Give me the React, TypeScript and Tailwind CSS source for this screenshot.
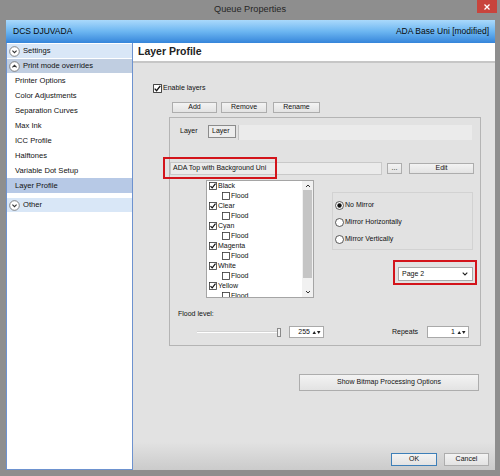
import React from "react";

const channels = ["Black", "Clear", "Cyan", "Magenta", "White", "Yellow"];

const menu = [
  "Printer Options",
  "Color Adjustments",
  "Separation Curves",
  "Max Ink",
  "ICC Profile",
  "Halftones",
  "Variable Dot Setup",
  "Layer Profile",
];

function Box({ on, size = 8 }: { on?: boolean; size?: number }) {
  return (
    <svg width={size} height={size} viewBox="0 0 8 8" className="shrink-0">
      <rect x="0.5" y="0.5" width="7" height="7" fill="#fff" stroke="#333" strokeWidth="0.8" />
      {on && (
        <path d="M1.5 4.1 L3.2 5.9 L6.5 1.7" fill="none" stroke="#111" strokeWidth="1.2" />
      )}
    </svg>
  );
}

function Radio({ on }: { on?: boolean }) {
  return (
    <svg width="9" height="9" viewBox="0 0 9 9" className="shrink-0">
      <circle cx="4.5" cy="4.5" r="4" fill="#fff" stroke="#333" strokeWidth="0.8" />
      {on && <circle cx="4.5" cy="4.5" r="2.2" fill="#111" />}
    </svg>
  );
}

function Toggle({ up }: { up?: boolean }) {
  return (
    <svg width="11" height="11" viewBox="0 0 11 11" className="shrink-0">
      <circle cx="5.5" cy="5.5" r="4.8" fill="#fff" stroke="#6a6a6a" strokeWidth="0.8" />
      <path
        d={up ? "M3.4 6.4 L5.5 4.3 L7.6 6.4" : "M3.4 4.6 L5.5 6.7 L7.6 4.6"}
        fill="none"
        stroke="#333"
        strokeWidth="1.1"
      />
    </svg>
  );
}

function SpinArrows() {
  return (
    <svg width="9" height="6" viewBox="0 0 9 6" className="shrink-0">
      <path d="M0.5 5 L2.25 2 L4 5 Z" fill="#222" />
      <path d="M5 2 L6.75 5 L8.5 2 Z" fill="#222" />
    </svg>
  );
}

function Btn({ w, label, def }: { w: string; label: string; def?: boolean }) {
  return (
    <div
      className={`${w} flex items-center justify-center border bg-linear-to-b from-[#f3f3f3] to-[#e3e3e3] text-[7px] text-[#111] ${
        def ? "border-[#3d7fb8]" : "border-[#adadad]"
      }`}
    >
      {label}
    </div>
  );
}

export default function App() {
  return (
    <div className="flex h-[476px] w-[500px] flex-col bg-[#8e8e8e] pl-[6px] pr-[5px] pb-[6px] font-['Liberation_Sans',Arial,sans-serif] text-[#111]">
      {/* title bar */}
      <div className="relative -ml-[6px] -mr-[5px] flex h-[20px] items-center justify-center text-[9.2px] text-[#262626]">
        Queue Properties
        <div className="absolute right-[3px] top-0 flex h-[13px] w-[20px] items-center justify-center bg-[#c8443c]">
          <svg width="6" height="6" viewBox="0 0 6 6">
            <path d="M0.5 0.5 L5.5 5.5 M5.5 0.5 L0.5 5.5" stroke="#fff" strokeWidth="1.3" />
          </svg>
        </div>
      </div>

      {/* blue header */}
      <div className="flex h-[23px] items-center justify-between bg-linear-to-b from-[#aad9fb] via-[#6cb6f1] to-[#3585da] pl-[7px] pr-[6px] text-[8.5px] text-[#0a0a0a]">
        <span>DCS DJUVADA</span>
        <span>ADA Base Uni [modified]</span>
      </div>

      <div className="flex h-[427px]">
        {/* left navigation */}
        <div className="flex w-[127px] flex-col border-x border-b border-[#6d92cf] bg-white text-[7.6px]">
          <div className="mt-[1px] flex h-[14px] items-center gap-[3px] bg-[#d9e7f7] pl-[2px]">
            <Toggle />
            Settings
          </div>
          <div className="mt-[1px] flex h-[14px] items-center gap-[3px] bg-[#c0cee1] pl-[2px]">
            <Toggle up />
            Print mode overrides
          </div>
          {menu.map((m) => (
            <div
              key={m}
              className={`flex h-[15px] items-center pl-[8px] ${
                m === "Layer Profile" ? "bg-[#b7c9e6]" : ""
              }`}
            >
              {m}
            </div>
          ))}
          <div className="mt-[5px] flex h-[14px] items-center gap-[3px] bg-[#d9e7f7] pl-[2px]">
            <Toggle />
            Other
          </div>
        </div>

        {/* right content */}
        <div className="flex flex-1 flex-col bg-[#e2e2e2] text-[7px]">
          <div className="flex h-[20px] items-center border-b-2 border-[#c6c6c6] bg-white pl-[5px] text-[10.5px] font-bold text-[#222]">
            Layer Profile
          </div>

          <div className="ml-[20px] mt-[20px] flex h-[10px] items-center gap-[1px]">
            <Box on size={9} />
            Enable layers
          </div>

          <div className="ml-[39px] mt-[9px] flex h-[11px]">
            <Btn w="w-[45px]" label="Add" />
            <div className="w-[4px]" />
            <Btn w="w-[46px]" label="Remove" />
            <div className="w-[6px]" />
            <Btn w="w-[47px]" label="Rename" />
          </div>

          {/* group box */}
          <div className="relative ml-[36px] mt-[4px] flex h-[229px] w-[312px] flex-col border border-[#b4b4b4]">
            <div className="mt-[7px] flex h-[15px]">
              <div className="ml-[10px] flex h-[13px] w-[28px] items-center">Layer</div>
              <div className="flex h-[13px] w-[28px] items-center border border-[#8c8c8c] bg-[#ededed] pl-[3px]">
                Layer
              </div>
              <div className="ml-[2px] mr-[8px] flex-1 border-l border-[#c4c4c4] bg-[#ebebeb]" />
            </div>

            <div className="mt-[22px] flex h-[13px] items-start">
              <div className="flex h-[13px] w-[212px] items-center border border-[#c9c9c9] bg-[#ebebeb] pl-[2px]">
                ADA Top with Background Uni
              </div>
              <div className="ml-[5px] mt-[1px] flex h-[11px]">
                <Btn w="w-[15px]" label="..." />
              </div>
              <div className="ml-[7px] mt-[1px] flex h-[11px]">
                <Btn w="w-[65px]" label="Edit" />
              </div>
            </div>

            <div className="mt-[5px] flex">
              {/* channel list */}
              <div className="ml-[36px] flex h-[118px] w-[108px] border border-[#a5a5a5] bg-white">
                <div className="flex flex-1 flex-col overflow-hidden pl-[2px]">
                  {channels.map((c) => (
                    <React.Fragment key={c}>
                      <div className="flex h-[10px] shrink-0 items-center gap-[1px]">
                        <Box on />
                        {c}
                      </div>
                      <div className="ml-[13px] flex h-[10px] shrink-0 items-center gap-[1px]">
                        <Box />
                        Flood
                      </div>
                    </React.Fragment>
                  ))}
                </div>
                <div className="flex w-[11px] flex-col items-center bg-[#f1f1f1]">
                  <svg width="6" height="9" viewBox="0 0 6 9" className="shrink-0">
                    <path d="M1 6 L3 4 L5 6" fill="none" stroke="#333" strokeWidth="1" />
                  </svg>
                  <div className="h-[88px] w-[9px] bg-[#c5c5c5]" />
                  <div className="flex-1" />
                  <svg width="6" height="9" viewBox="0 0 6 9" className="shrink-0">
                    <path d="M1 3 L3 5 L5 3" fill="none" stroke="#333" strokeWidth="1" />
                  </svg>
                </div>
              </div>

              <div className="ml-[18px] flex flex-col">
                <div className="mt-[12px] flex h-[58px] w-[141px] flex-col border border-[#d2d2d2] pl-[2px] pt-[7px]">
                  <div className="flex h-[10px] items-center gap-[1px]">
                    <Radio on />
                    No Mirror
                  </div>
                  <div className="mt-[7px] flex h-[10px] items-center gap-[1px]">
                    <Radio />
                    Mirror Horizontally
                  </div>
                  <div className="mt-[7px] flex h-[10px] items-center gap-[1px]">
                    <Radio />
                    Mirror Vertically
                  </div>
                </div>
                <div className="ml-[66px] mt-[17px] flex h-[14px] w-[75px] items-center justify-between border border-[#a9a9a9] bg-white pl-[3px] pr-[4px]">
                  Page 2
                  <svg width="6" height="4" viewBox="0 0 6 4">
                    <path d="M0.7 0.7 L3 3 L5.3 0.7" fill="none" stroke="#222" strokeWidth="1.1" />
                  </svg>
                </div>
              </div>
            </div>

            <div className="ml-[8px] mt-[11px] flex h-[10px] items-center">Flood level:</div>

            <div className="mt-[7px] flex h-[12px] items-center">
              <div className="ml-[27px] h-[2px] w-[80px] border-b border-white bg-[#d3d3d3]" />
              <div className="h-[9px] w-[4px] border border-[#8a8a8a] bg-[#f2f2f2]" />
              <div className="ml-[8px] flex h-[12px] w-[35px] items-center justify-end gap-[2px] border border-[#a9a9a9] bg-white pr-[2px]">
                255
                <SpinArrows />
              </div>
              <div className="ml-[68px] w-[26px]">Repeats</div>
              <div className="ml-[9px] flex h-[12px] w-[42px] items-center justify-end gap-[2px] border border-[#a9a9a9] bg-white pr-[2px]">
                1
                <SpinArrows />
              </div>
            </div>

            {/* highlight frames */}
            <div className="absolute left-[-7px] top-[39px] h-[22px] w-[114px] border-2 border-[#d3141b]" />
            <div className="absolute left-[223px] top-[142px] h-[25px] w-[84px] border-2 border-[#d3141b]" />
          </div>

          <div className="ml-[166px] mt-[28px] flex h-[17px]">
            <Btn w="w-[180px]" label="Show Bitmap Processing Options" />
          </div>

          <div className="mt-auto flex h-[28px] items-end justify-end gap-[7px] bg-linear-to-b from-[#e2e2e2] to-[#cbcbcb] pb-[4px] pr-[6px]">
            <div className="flex h-[13px]">
              <Btn w="w-[46px]" label="OK" def />
            </div>
            <div className="flex h-[13px]">
              <Btn w="w-[45px]" label="Cancel" />
            </div>
          </div>
        </div>
      </div>
    </div>
  );
}
